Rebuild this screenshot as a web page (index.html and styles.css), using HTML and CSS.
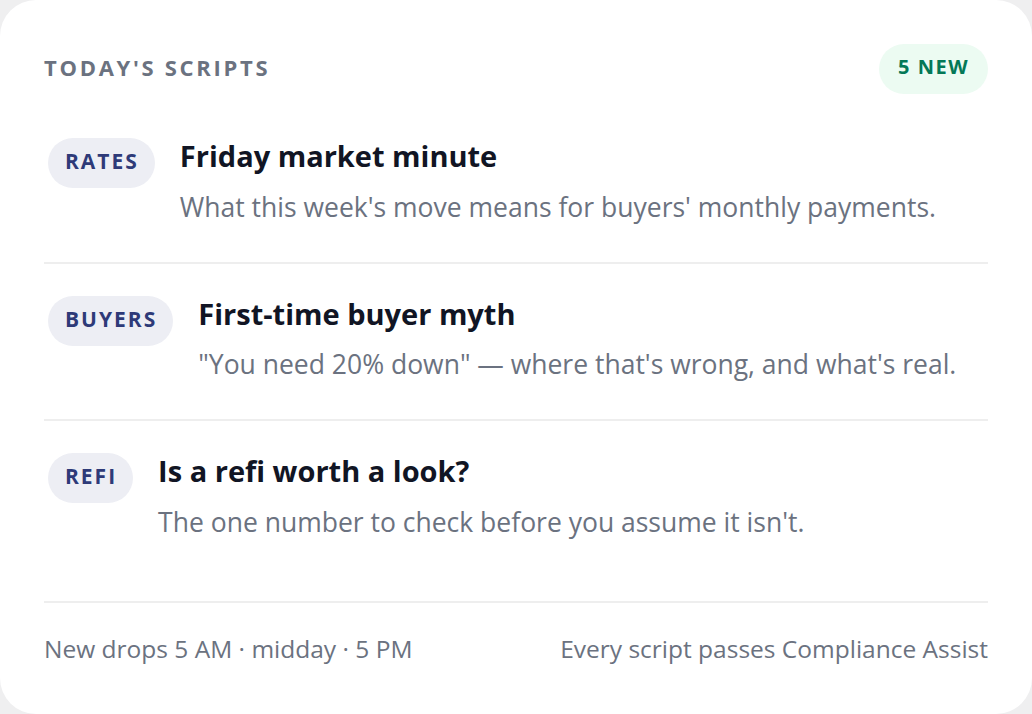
FILE: index.html
```html
<!DOCTYPE html>
<html lang="en">

<head>
    <meta charset="UTF-8">
    <meta name="viewport" content="width=device-width, initial-scale=1.0">
    <title>Today's Scripts</title>
    <link rel="stylesheet" href="styles.css">
</head>

<body>

    <div class="card">
        <div class="card-header">
            <h2 class="eyebrow">TODAY'S SCRIPTS</h2>
            <span class="new-badge">5 NEW</span>
        </div>

        <ul class="script-list">
            <li class="script">
                <span class="tag">RATES</span>
                <div class="script-text">
                    <h3>Friday market minute</h3>
                    <p>What this week's move means for buyers' monthly payments.</p>
                </div>
            </li>
            <li class="script">
                <span class="tag">BUYERS</span>
                <div class="script-text">
                    <h3>First-time buyer myth</h3>
                    <p>"You need 20% down" — where that's wrong, and what's real.</p>
                </div>
            </li>
            <li class="script">
                <span class="tag">REFI</span>
                <div class="script-text">
                    <h3>Is a refi worth a look?</h3>
                    <p>The one number to check before you assume it isn't.</p>
                </div>
            </li>
        </ul>

        <div class="card-footer">
            <span>New drops 5 AM · midday · 5 PM</span>
            <span>Every script passes Compliance Assist</span>
        </div>
    </div>

</body>

</html>
```

FILE: styles.css
```css
* {
    margin: 0;
    padding: 0;
    box-sizing: border-box;
}

body {
    font-family: "Open Sans", "Liberation Sans", sans-serif;
    line-height: 1.2;
    background-color: #efeff0;
    height: 100vh;
}

.card {
    background-color: #fff;
    border-radius: 36px;
    height: 100%;
    padding: 44px 44px 51px;
    display: flex;
    flex-direction: column;
}

.card-header {
    display: flex;
    justify-content: space-between;
    align-items: center;
    height: 50px;
}

.eyebrow {
    font-size: 22px;
    font-weight: 700;
    letter-spacing: 2.7px;
    color: #6b7280;
    margin-top: -4px;
}

.new-badge {
    background-color: #ecfbf2;
    color: #047857;
    font-size: 20px;
    font-weight: 700;
    letter-spacing: 1.5px;
    height: 50px;
    line-height: 46px;
    padding: 0 19px;
    border-radius: 25px;
}

.script-list {
    list-style: none;
    margin-top: 12px;
}

.script {
    display: flex;
    align-items: flex-start;
    gap: 25px;
    padding: 32px 0 38px;
    border-bottom: 2px solid #eeeeee;
}

.script:last-child {
    border-bottom: none;
}

.tag {
    flex-shrink: 0;
    margin-left: 4px;
    background-color: #edeef4;
    color: #2e3a78;
    font-size: 21px;
    font-weight: 700;
    letter-spacing: 2px;
    height: 50px;
    line-height: 46px;
    padding: 0 16px 0 17px;
    border-radius: 25px;
}

.script-text h3 {
    font-size: 29px;
    font-weight: 700;
    color: #111524;
    margin-top: 1px;
}

.script-text p {
    margin-top: 18px;
    font-size: 26.5px;
    color: #6b7280;
}

.card-footer {
    margin-top: auto;
    border-top: 2px solid #eeeeee;
    padding-top: 31px;
    display: flex;
    justify-content: space-between;
    font-size: 24.5px;
    color: #6b7280;
}
```
